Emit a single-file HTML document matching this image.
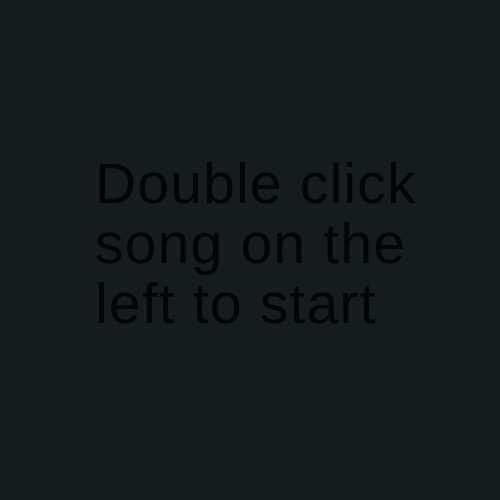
<!DOCTYPE html>
<html><head><style>
html,body{margin:0;width:500px;height:500px;background:#151d20;overflow:hidden}
.t{position:absolute;left:95px;top:154px;font-family:"Liberation Sans",sans-serif;font-size:57px;line-height:60px;letter-spacing:1.2px;color:#020405;white-space:nowrap}
</style></head><body>
<div class="t">Double click<br>song on the<br>left to start</div>
</body></html>
